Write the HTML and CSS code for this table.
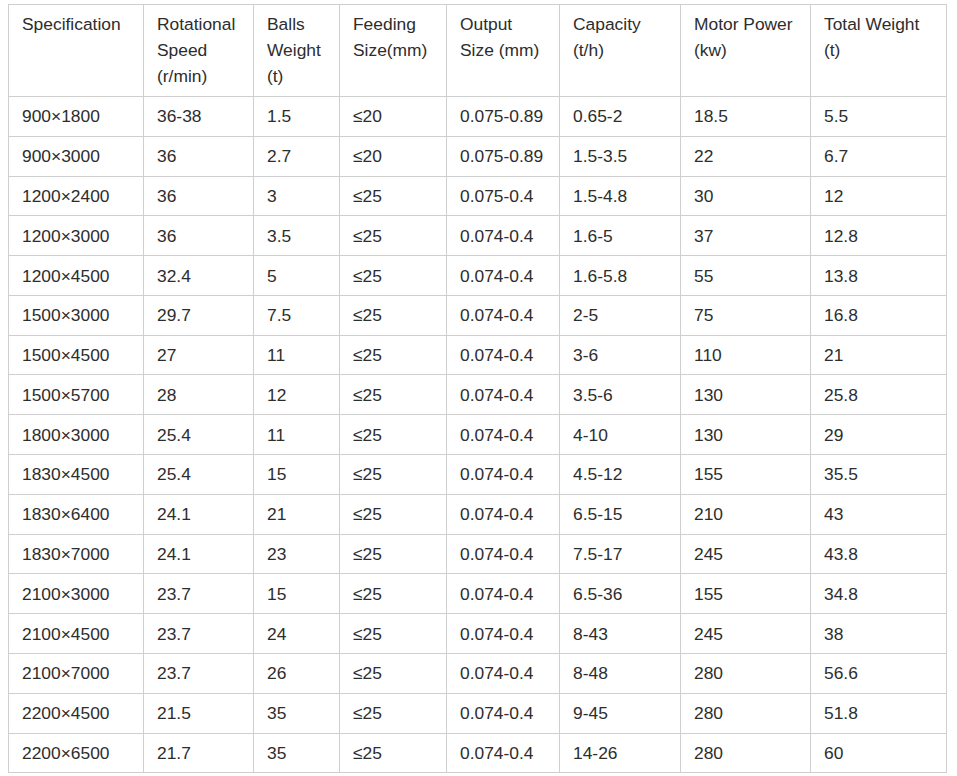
FILE: index.html
```html
<!DOCTYPE html>
<html>
<head>
<meta charset="utf-8">
<link rel="stylesheet" href="styles.css">
</head>
<body>
<div class="wrap">
<table class="spec">
<colgroup>
<col class="c1"><col class="c2"><col class="c3"><col class="c4"><col class="c5"><col class="c6"><col class="c7"><col class="c8">
</colgroup>
<thead>
<tr>
<th>Specification</th>
<th>Rotational Speed (r/min)</th>
<th>Balls Weight (t)</th>
<th>Feeding Size(mm)</th>
<th>Output Size (mm)</th>
<th>Capacity (t/h)</th>
<th>Motor Power (kw)</th>
<th>Total Weight (t)</th>
</tr>
</thead>
<tbody>
<tr><td>900×1800</td><td>36-38</td><td>1.5</td><td>≤20</td><td>0.075-0.89</td><td>0.65-2</td><td>18.5</td><td>5.5</td></tr>
<tr><td>900×3000</td><td>36</td><td>2.7</td><td>≤20</td><td>0.075-0.89</td><td>1.5-3.5</td><td>22</td><td>6.7</td></tr>
<tr><td>1200×2400</td><td>36</td><td>3</td><td>≤25</td><td>0.075-0.4</td><td>1.5-4.8</td><td>30</td><td>12</td></tr>
<tr><td>1200×3000</td><td>36</td><td>3.5</td><td>≤25</td><td>0.074-0.4</td><td>1.6-5</td><td>37</td><td>12.8</td></tr>
<tr><td>1200×4500</td><td>32.4</td><td>5</td><td>≤25</td><td>0.074-0.4</td><td>1.6-5.8</td><td>55</td><td>13.8</td></tr>
<tr><td>1500×3000</td><td>29.7</td><td>7.5</td><td>≤25</td><td>0.074-0.4</td><td>2-5</td><td>75</td><td>16.8</td></tr>
<tr><td>1500×4500</td><td>27</td><td>11</td><td>≤25</td><td>0.074-0.4</td><td>3-6</td><td>110</td><td>21</td></tr>
<tr><td>1500×5700</td><td>28</td><td>12</td><td>≤25</td><td>0.074-0.4</td><td>3.5-6</td><td>130</td><td>25.8</td></tr>
<tr><td>1800×3000</td><td>25.4</td><td>11</td><td>≤25</td><td>0.074-0.4</td><td>4-10</td><td>130</td><td>29</td></tr>
<tr><td>1830×4500</td><td>25.4</td><td>15</td><td>≤25</td><td>0.074-0.4</td><td>4.5-12</td><td>155</td><td>35.5</td></tr>
<tr><td>1830×6400</td><td>24.1</td><td>21</td><td>≤25</td><td>0.074-0.4</td><td>6.5-15</td><td>210</td><td>43</td></tr>
<tr><td>1830×7000</td><td>24.1</td><td>23</td><td>≤25</td><td>0.074-0.4</td><td>7.5-17</td><td>245</td><td>43.8</td></tr>
<tr><td>2100×3000</td><td>23.7</td><td>15</td><td>≤25</td><td>0.074-0.4</td><td>6.5-36</td><td>155</td><td>34.8</td></tr>
<tr><td>2100×4500</td><td>23.7</td><td>24</td><td>≤25</td><td>0.074-0.4</td><td>8-43</td><td>245</td><td>38</td></tr>
<tr><td>2100×7000</td><td>23.7</td><td>26</td><td>≤25</td><td>0.074-0.4</td><td>8-48</td><td>280</td><td>56.6</td></tr>
<tr><td>2200×4500</td><td>21.5</td><td>35</td><td>≤25</td><td>0.074-0.4</td><td>9-45</td><td>280</td><td>51.8</td></tr>
<tr><td>2200×6500</td><td>21.7</td><td>35</td><td>≤25</td><td>0.074-0.4</td><td>14-26</td><td>280</td><td>60</td></tr>
</tbody>
</table>
</div>
</body>
</html>
```
FILE: styles.css
```css
html, body {
  margin: 0;
  padding: 0;
  background: #fff;
}
.wrap {
  padding: 4px 8px;
}
.spec {
  border-collapse: collapse;
  table-layout: fixed;
  width: 938px;
  font-family: "Liberation Sans", Arial, sans-serif;
  font-size: 17.4px;
  line-height: 26px;
  color: #2d2d2d;
}
.c1 { width: 135px; }
.c2 { width: 110px; }
.c3 { width: 86px; }
.c4 { width: 107px; }
.c5 { width: 113px; }
.c6 { width: 121px; }
.c7 { width: 130px; }
.c8 { width: 136px; }
.spec th, .spec td {
  border: 1px solid #cfcfcf;
  padding: 6.4px 13px;
  text-align: left;
  font-weight: normal;
  vertical-align: top;
}
.spec th {
  padding-top: 5.5px;
  padding-bottom: 7.5px;
}
.spec td {
  vertical-align: middle;
}
```
